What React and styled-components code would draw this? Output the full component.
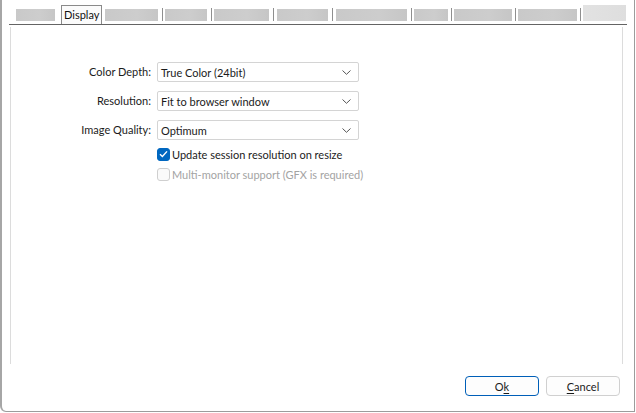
import React from "react";
import styled, { createGlobalStyle } from "styled-components";

const GlobalStyle = createGlobalStyle`
  html, body {
    margin: 0;
    padding: 0;
    background: #ffffff;
  }
  body {
    font-family: Lato, "Noto Sans", sans-serif;
    font-size: 11px;
    color: #1b1b1b;
  }
`;

const Frame = styled.div`
  box-sizing: border-box;
  width: 635px;
  height: 412px;
  border-left: 2px solid #a6a6a6;
  border-right: 1px solid #9c9c9c;
  border-bottom: 1px solid #9c9c9c;
  border-bottom-left-radius: 6px;
  display: flex;
  flex-direction: column;
  background: #fff;
`;

const TabStrip = styled.div`
  display: flex;
  align-items: flex-start;
  height: 24px;
  width: 618px;
  margin-left: 7px;
  border-bottom: 1px solid #646464;
`;

const Blur = styled.div`
  flex-shrink: 0;
  width: ${(p) => p.$w}px;
  margin-left: ${(p) => p.$ml || 0}px;
  margin-top: ${(p) => (p.$light ? 5 : 9)}px;
  height: ${(p) => (p.$light ? 16 : 12)}px;
  background: ${(p) =>
    p.$light
      ? "linear-gradient(90deg, #e2e2e2, #dedede)"
      : "linear-gradient(90deg, #c9c9c9, #cdcdcd 60%, #c6c6c6)"};
`;

const Sep = styled.div`
  flex-shrink: 0;
  width: 1px;
  height: 13px;
  margin-top: 8px;
  margin-left: ${(p) => p.$ml || 0}px;
  background: #8f8f8f;
`;

const ActiveTab = styled.div`
  flex-shrink: 0;
  box-sizing: border-box;
  margin-left: ${(p) => p.$ml}px;
  margin-top: 5px;
  height: 19px;
  width: 41px;
  border: 1px solid #8a8a8a;
  border-bottom: none;
  background: #fbfbfb;
  line-height: 18px;
  padding-left: 2px;
  color: #111;
  white-space: nowrap;
  overflow: hidden;
`;

const Panel = styled.div`
  box-sizing: border-box;
  margin: 2px 0 0 8px;
  width: 613px;
  height: 337px;
  border-left: 1px solid #dcdcdc;
  border-right: 1px solid #dcdcdc;
  padding-top: 35px;
`;

const Form = styled.div`
  display: grid;
  grid-template-columns: 140px 202px;
  column-gap: 6px;
  row-gap: 9px;
  align-items: center;
`;

const Label = styled.label`
  text-align: right;
  line-height: 20px;
`;

const Select = styled.div`
  box-sizing: border-box;
  height: 20px;
  border: 1px solid #d4d4d4;
  border-radius: 2px;
  background: #fff;
  display: flex;
  align-items: center;
  justify-content: space-between;
  padding: 0 7px 0 3px;
`;

const Checks = styled.div`
  grid-column: 2 / span 1;
  display: flex;
  flex-direction: column;
  gap: 6px;
  margin-top: -2px;
  white-space: nowrap;
`;

const CheckRow = styled.label`
  display: flex;
  align-items: center;
  gap: 2px;
  height: 14px;
  color: ${(p) => (p.$disabled ? "#a3a3a3" : "#1b1b1b")};
`;

const Box = styled.span`
  flex-shrink: 0;
  box-sizing: border-box;
  width: 13px;
  height: 13px;
  border-radius: 3px;
  display: inline-flex;
  align-items: center;
  justify-content: center;
  background: ${(p) => (p.$checked ? "#0067c0" : "#fafafa")};
  border: 1px solid ${(p) => (p.$checked ? "#0067c0" : "#cfcfcf")};
`;

const Footer = styled.div`
  display: flex;
  justify-content: flex-end;
  gap: 7px;
  padding: 12px 14px 0 0;
`;

const Button = styled.button`
  box-sizing: border-box;
  width: 74px;
  height: 20px;
  border-radius: 4px;
  background: #fdfdfd;
  border: 1px solid ${(p) => (p.$primary ? "#005fb8" : "#d0d0d0")};
  font-family: inherit;
  font-size: 11px;
  color: #1b1b1b;
  padding: 0;
  u {
    text-decoration-thickness: 1px;
    text-underline-offset: 2px;
  }
`;

const Chevron = () => (
  <svg width="9" height="5" viewBox="0 0 9 5">
    <path d="M0.5 0.5 L4.5 4.3 L8.5 0.5" fill="none" stroke="#555" strokeWidth="1" />
  </svg>
);

const Tick = () => (
  <svg width="9" height="8" viewBox="0 0 9 8">
    <path d="M1 4.2 L3.4 6.5 L8 1.4" fill="none" stroke="#fff" strokeWidth="1.4" />
  </svg>
);

const fields = [
  ["Color Depth:", "True Color (24bit)"],
  ["Resolution:", "Fit to browser window"],
  ["Image Quality:", "Optimum"],
];

// blurred neighbour tabs: [gap before separator, gap before block, width]
const tabs = [
  [4, 2, 42],
  [4, 2, 55],
  [4, 3, 51],
  [4, 3, 71],
  [4, 2, 34],
  [3, 2, 58],
  [3, 2, 59],
];

export default function App() {
  return (
    <>
      <GlobalStyle />
      <Frame>
        <TabStrip>
          <Blur $w={39} $ml={7} />
          <ActiveTab $ml={6}>Display</ActiveTab>
          <Blur $w={53} $ml={3} />
          {tabs.map(([s, m, w], i) => (
            <React.Fragment key={i}>
              <Sep $ml={s} />
              <Blur $w={w} $ml={m} />
            </React.Fragment>
          ))}
          <Sep $ml={3} />
          <Blur $w={43} $ml={2} $light />
        </TabStrip>
        <Panel>
          <Form>
            {fields.map(([label, value]) => (
              <React.Fragment key={label}>
                <Label>{label}</Label>
                <Select>
                  <span>{value}</span>
                  <Chevron />
                </Select>
              </React.Fragment>
            ))}
            <Checks>
              <CheckRow>
                <Box $checked>
                  <Tick />
                </Box>
                Update session resolution on resize
              </CheckRow>
              <CheckRow $disabled>
                <Box />
                Multi-monitor support (GFX is required)
              </CheckRow>
            </Checks>
          </Form>
        </Panel>
        <Footer>
          <Button $primary>
            O<u>k</u>
          </Button>
          <Button>
            <u>C</u>ancel
          </Button>
        </Footer>
      </Frame>
    </>
  );
}
